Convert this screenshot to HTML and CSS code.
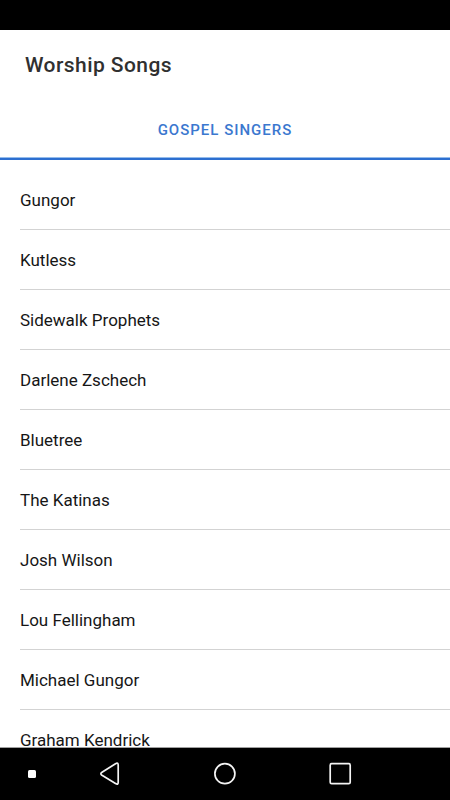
FILE: index.html
```html
<!DOCTYPE html>
<html lang="en">
<head>
<meta charset="utf-8">
<title>Worship Songs</title>
<link rel="stylesheet" href="styles.css">
</head>
<body>
<div class="screen">
  <div class="status-bar"></div>
  <header class="header"><h1 class="title">Worship Songs</h1></header>
  <nav class="tabs"><a class="tab">GOSPEL SINGERS</a></nav>
  <main class="content">
    <ul class="list">
      <li class="item">Gungor</li>
      <li class="item">Kutless</li>
      <li class="item">Sidewalk Prophets</li>
      <li class="item">Darlene Zschech</li>
      <li class="item">Bluetree</li>
      <li class="item">The Katinas</li>
      <li class="item">Josh Wilson</li>
      <li class="item">Lou Fellingham</li>
      <li class="item">Michael Gungor</li>
      <li class="item">Graham Kendrick</li>
    </ul>
  </main>
  <footer class="nav-bar">
    <svg width="450" height="52" viewBox="0 0 450 52" fill="none" stroke="#f4f4f4" stroke-width="1.7">
      <rect x="28" y="22" width="8" height="8" rx="1.5" fill="#fff" stroke="none"/>
      <path d="M115.500 15.700Q118.200 14.300 118.200 17V34.500Q118.200 37.200 115.500 35.600L102 27.300Q99.700 25.700 102 24.200Z" stroke-linejoin="round"/>
      <circle cx="224.900" cy="25.700" r="10"/>
      <rect x="330.200" y="15.700" width="20" height="20" rx="1.500"/>
    </svg>
  </footer>
</div>
</body>
</html>
```
FILE: styles.css
```css
* { box-sizing: border-box; }
body { margin: 0; background: #fff; font-family: Roboto, sans-serif; }
.screen { width: 450px; height: 800px; display: flex; flex-direction: column; overflow: hidden; }
.status-bar { height: 30px; background: #000; flex: none; }
.header { height: 70px; flex: none; display: flex; align-items: center; padding: 0 25px; }
.title { margin: 0; font-size: 21px; font-weight: 500; letter-spacing: 0.43px; color: #303030; }
.tabs { height: 60px; flex: none; display: flex; border-bottom: 2px solid #2d6fd0; }
.tab { flex: 1; display: flex; align-items: center; justify-content: center; padding-top: 3px; border-bottom: 1px solid #94bcec; font-size: 15px; font-weight: 500; letter-spacing: 1px; color: #3b78cf; }
.content { flex: 1; min-height: 0; overflow: hidden; padding-top: 10px; border-bottom: 1px solid #a0a0a0; }
.list { list-style: none; margin: 0; padding: 0 0 0 20px; }
.item { height: 60px; display: flex; align-items: center; border-bottom: 1px solid #d3d3d3; font-size: 17px; color: #161616; }
.nav-bar { height: 52px; flex: none; background: #000; }
.nav-bar svg { display: block; }
```
